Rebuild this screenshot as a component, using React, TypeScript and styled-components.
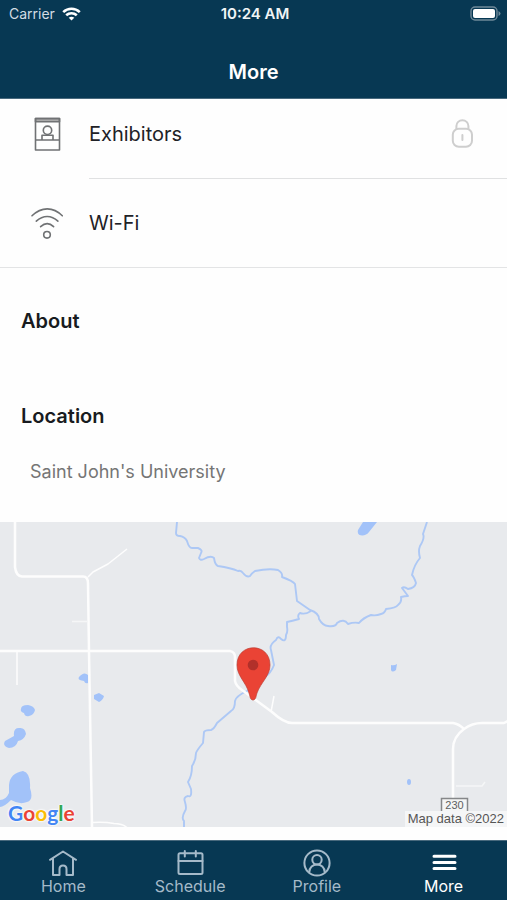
import React from "react";
import styled, { createGlobalStyle } from "styled-components";

const GlobalStyle = createGlobalStyle`
  *, *::before, *::after { box-sizing: border-box; }
  body {
    margin: 0;
    background: #fefefe;
    color: #1f2227;
    font-family: Inter, "Liberation Sans", sans-serif;
    font-size: 18px;
  }
`;

const Page = styled.div`
  display: flex;
  flex-direction: column;
  min-height: 100vh;
`;

const Header = styled.header`
  background: #073853;
  color: #fff;
  z-index: 1;
  border-bottom: 1px solid #48697d;
`;

const StatusBar = styled.div`
  display: grid;
  grid-template-columns: 1fr auto 1fr;
  align-items: center;
  height: 27px;
  padding: 0 6px 0 9px;
  font-size: 14px;
`;

const Carrier = styled.span`
  display: flex;
  align-items: center;
  gap: 7px;
  color: #d3dde3;
`;

const Clock = styled.time`
  font-size: 15px;
  font-weight: 600;
  color: #f0f4f6;
`;

const Battery = styled.svg`
  justify-self: end;
`;

const Title = styled.h1`
  display: flex;
  align-items: center;
  justify-content: center;
  height: 71px;
  margin: 0;
  padding-top: 19px;
  font-size: 20px;
  font-weight: 600;
`;

const Main = styled.main`
  flex: 1;
  overflow: hidden;
  padding-bottom: 13px;
`;

const List = styled.ul`
  list-style: none;
  margin: -10px 0 0;
  padding: 0;
  border-bottom: 1px solid #e3e4e5;
`;

const Item = styled.li`
  & + & > button > span { border-top: 1px solid #e0e1e2; }
`;

const RowButton = styled.button`
  display: flex;
  align-items: center;
  width: 100%;
  height: 89px;
  padding: 0 0 0 29px;
  border: 0;
  background: none;
  color: inherit;
  font: inherit;
  text-align: left;
  cursor: pointer;
`;

const RowLabel = styled.span`
  display: flex;
  flex: 1;
  align-items: center;
  justify-content: space-between;
  align-self: stretch;
  margin-left: 24px;
  padding-right: 33px;
  font-size: 20px;
`;

const Section = styled.section<{ $gap: number }>`
  padding: ${(p) => p.$gap}px 21px 0;
`;

const Heading = styled.h2`
  margin: 0;
  font-size: 20px;
  line-height: 28px;
  font-weight: 600;
  color: #181b20;
`;

const Place = styled.p`
  margin: 0;
  padding: 30px 9px 38px;
  font-size: 18px;
  line-height: 24px;
  color: #757575;
`;

const MapFrame = styled.figure`
  position: relative;
  height: 305px;
  margin: 0;
  overflow: hidden;
  background: #e8eaed;
`;

const MapArt = styled.svg`
  display: block;
  width: 100%;
  height: 100%;
`;

const GoogleMark = styled.a`
  position: absolute;
  left: 8px;
  bottom: 0;
  font-family: Lato, sans-serif;
  font-size: 21px;
  line-height: 28px;
  font-weight: 700;
  text-decoration: none;
  text-shadow: 0 0 2px #fff, 0 0 2px #fff, 0 0 3px #fff;
`;

const Letter = styled.span<{ $color: string }>`
  color: ${(p) => p.$color};
`;

const Attribution = styled.figcaption`
  position: absolute;
  right: 0;
  bottom: 0;
  padding: 0 3px;
  background: #f5f6f7;
  color: #555;
  font-family: "Liberation Sans", Arial, sans-serif;
  font-size: 13px;
  line-height: 16px;
`;

const TabBar = styled.nav`
  display: grid;
  grid-template-columns: repeat(4, 1fr);
  height: 60px;
  background: #073853;
  border-top: 1px solid #48697d;
`;

const Tab = styled.a<{ $active?: boolean }>`
  display: flex;
  flex-direction: column;
  align-items: center;
  padding-top: 8px;
  color: ${(p) => (p.$active ? "#fff" : "#a5bac9")};
  font-size: 16px;
  line-height: 18px;
  text-decoration: none;
`;

const Icon = styled.svg`
  display: block;
  flex: none;
  fill: none;
  stroke: currentColor;
  stroke-linecap: round;
  stroke-linejoin: round;
`;

const RowIcon = styled(Icon)`
  color: #707274;
  stroke-width: 1.6;
`;

const LockSvg = styled(Icon)`
  color: #cecece;
  stroke-width: 2;
`;

const TabIcon = styled(Icon)<{ $heavy?: boolean }>`
  stroke-width: ${(p) => (p.$heavy ? 3 : 2)};
`;

const googleLetters: [string, string][] = [
  ["G", "#4285f4"],
  ["o", "#ea4335"],
  ["o", "#fbbc05"],
  ["g", "#4285f4"],
  ["l", "#34a853"],
  ["e", "#ea4335"],
];

const WifiSignal = () => (
  <svg width="19" height="14" viewBox="0 0 19 14" fill="none" stroke="#fff" strokeWidth="2.6" aria-hidden="true">
    <path d="M1.2 5.1C6 .7 13 .7 17.8 5.1" />
    <path d="M4.2 8.3c3-2.8 7.6-2.8 10.6 0" />
    <path d="M6.7 10.8c1.7-1.5 3.9-1.5 5.6 0L9.5 13.6z" fill="#fff" stroke="none" />
  </svg>
);

const ExhibitorIcon = () => (
  <RowIcon width="36" height="36" viewBox="0 0 36 36" aria-hidden="true">
    <path d="M6.5 2.5h24v3.2h-24z" fill="#aaa" />
    <path d="M6.5 2.5h24v31.5h-24zM6.500 24h24M13 23.500v-4.300h11v4.300" />
    <circle cx="18.5" cy="14.3" r="4.2" />
  </RowIcon>
);

const WifiIcon = () => (
  <RowIcon width="36" height="36" viewBox="0 0 36 36" aria-hidden="true">
    <path d="M3 10.8C12.4 1.500 24.2 1.500 33.3 10.8M7.3 16.2c6.8-6.3 15-6.3 21.6 0M11.6 21.6c4.2-3.8 9-3.8 13 0" />
    <circle cx="18" cy="29.8" r="3.3" />
  </RowIcon>
);

const LockIcon = () => (
  <LockSvg width="23" height="30" viewBox="0 0 23 30" role="img" aria-label="Locked">
    <path d="M5.4 10V7a6 5.8 0 0 1 12 0v3" />
    <rect x="1.8" y="9.7" width="19.2" height="18" rx="6" />
    <path d="M11.4 16v5" />
  </LockSvg>
);

const HomeIcon = () => (
  <TabIcon width="30" height="28" viewBox="0 0 30 28" aria-hidden="true">
    <path d="M2 10.8 15 2.500l13 8.300M5 9.500v16.500h6.500v-6c0-4.700 7-4.700 7 0v6H25V9.500" />
  </TabIcon>
);

const CalendarIcon = () => (
  <TabIcon width="30" height="28" viewBox="0 0 30 28" aria-hidden="true">
    <rect x="3.5" y="4.200" width="24" height="20.800" rx="1.500" />
    <path d="M3.500 12h24M9.800 2v5.500M20.800 2v5.500" />
  </TabIcon>
);

const ProfileIcon = () => (
  <TabIcon width="30" height="28" viewBox="0 0 30 28" aria-hidden="true">
    <circle cx="15" cy="14" r="12.6" />
    <circle cx="15" cy="10.8" r="4.7" />
    <path d="M7.2 23.4c0-10.5 15.6-10.5 15.6 0" />
  </TabIcon>
);

const MenuIcon = () => (
  <TabIcon $heavy width="30" height="28" viewBox="0 0 30 28" aria-hidden="true">
    <path d="M5 7.200h21M5 13.500h21M5 19.500h21" />
  </TabIcon>
);

const tabs = [
  { label: "Home", Glyph: HomeIcon },
  { label: "Schedule", Glyph: CalendarIcon },
  { label: "Profile", Glyph: ProfileIcon },
  { label: "More", Glyph: MenuIcon, active: true },
];

const LocationMap = () => (
  <MapFrame>
    <MapArt viewBox="0 0 507 305" preserveAspectRatio="xMidYMid slice" role="img" aria-label="Map of Saint John's University">
      <g fill="none" stroke="#adc8f5" strokeWidth="1.9" strokeLinejoin="round">
        <path d="M177 0l-1 11q0 3 4 3 5 1 7 5 2 7 5 7l6 0q5 2 3 5l-2 5q1 3 5 1 7-4 10-1 1 7 4 8 13 2 20 5 3-1 5 2 4 5 7 3 2-3 5-5 14-3 23-1 5 3 4 7 11 4 13 7l2 17 13 9q9 3 9 9 4 7 9 7 8 1 9-3 7-5 11 1 6-2 11-1 4-5 12-8 5 1 10-1 4-1 5-5 10-1 12-4 4-3 3-8 4-1 7-1l-6-8q2-2 6 1 7-1 8-6-2-6-4-8 2-10 8-17-2-7 0-12 5-8 3-12L427 0" />
        <path d="M311 89q-6 4-11 2-3 2-1 6-7 2-12 3v5q1 5-1 8 0 8-5 4-3-4-5 1-7 5-5 10l3 15q-3 8-9 12L247 169q-11 5-12 10 0 8-4 10l-14 12q-3 6-6 7-6 0-7 2l-1 11q-6 7-7 10 0 7-4 13 0 10-4 16l3 7q1 9-3 7-5 1-3 6 2 7 0 9-4 7-1 10v7" />
      </g>
      <g fill="#a2c2f9">
        <path d="M363 0h14l-8 10c-3 5-13 5-11-2zM391 143q3 1 6-1l-1 6q-4 3-5 0zM88 153v8q-3 1-4-2-7-1-5-4 5-6 9-2zM94 173l5-2 5 3q-1 4-5 6l-5-3zM21 187q0-4 7-4 6 1 7 5-1 5-6 6-4 1-5-3-4-1-3-4zM19 206q6-1 7 6-2 6-8 7-2 7-9 7-7-2-4-7l9-5q-1-8 5-8zM9 271V263q1-12 14-14 8 2 7 17 4 12-3 14-7 3-16-2-7 7-11 7v-7q6 0 9-7z" />
        <ellipse cx="409" cy="260" rx="2" ry="3" />
      </g>
      <g fill="none" stroke="#fdfdfd" strokeWidth="2.5" strokeLinejoin="round">
        <path d="M15 0v45q1 9 7 9.5h61q5 0 5 7l1 68L92 305M0 129h230q5 1 5 6v24q1 5 7 9l30 22q12 11 20 11h161q6 1 11 6-11 8-11 20v50M464 207q8-6 18-6h22l4-2" />
        <g strokeWidth="1.5">
          <path d="M88 55l5-5 15-8 19-15M17 129v34M274 174l-3 16M92 300.5q12-1 22 1 8 0 13 4" />
          <path d="M72 99.5h16M456 264h26l3-4" stroke="#f5f6f7" />
        </g>
      </g>
      <rect x="441.5" y="276.5" width="26" height="18" fill="#f4f5f5" stroke="#858789" strokeWidth="1.5" />
      <text x="454.5" y="287" fill="#5d5f61" fontFamily="Liberation Sans" fontSize="11" textAnchor="middle">230</text>
      <path d="M253 178c-3 0-3-4-4-7-3-11-12-17-12-28 0-23 33-23 33 0 0 11-9 17-13 28-1 3-1 7-4 7z" fill="#ea4335" stroke="#bd3c32" strokeWidth=".7" />
      <circle cx="253" cy="143" r="5.3" fill="#b2302a" />
    </MapArt>
    <GoogleMark href="#google" aria-label="Google">
      {googleLetters.map(([char, color], i) => (
        <Letter key={i} $color={color}>{char}</Letter>
      ))}
    </GoogleMark>
    <Attribution>Map data ©2022</Attribution>
  </MapFrame>
);

export default function App() {
  return (
    <Page>
      <GlobalStyle />
      <Header>
        <StatusBar>
          <Carrier>Carrier <WifiSignal /></Carrier>
          <Clock>10:24 AM</Clock>
          <Battery width="31" height="15" viewBox="0 0 31 15" aria-hidden="true">
            <rect x="1" y="1" width="26" height="13" rx="4" fill="none" stroke="#6f8999" strokeWidth="1.4" />
            <rect x="3" y="3" width="22" height="9" rx="2" fill="#fff" />
            <path d="M28.5 5v5q2-1 2-2.5T28.5 5z" fill="#6f8999" />
          </Battery>
        </StatusBar>
        <Title>More</Title>
      </Header>
      <Main>
        <List>
          <Item>
            <RowButton type="button">
              <ExhibitorIcon />
              <RowLabel>Exhibitors <LockIcon /></RowLabel>
            </RowButton>
          </Item>
          <Item>
            <RowButton type="button">
              <WifiIcon />
              <RowLabel>Wi-Fi</RowLabel>
            </RowButton>
          </Item>
        </List>
        <Section $gap={39}>
          <Heading>About</Heading>
        </Section>
        <Section $gap={67}>
          <Heading>Location</Heading>
          <Place>Saint John's University</Place>
        </Section>
        <LocationMap />
      </Main>
      <TabBar aria-label="Main">
        {tabs.map(({ label, Glyph, active }) => (
          <Tab key={label} href={`#${label.toLowerCase()}`} $active={active} aria-current={active ? "page" : undefined}>
            <Glyph />
            {label}
          </Tab>
        ))}
      </TabBar>
    </Page>
  );
}
